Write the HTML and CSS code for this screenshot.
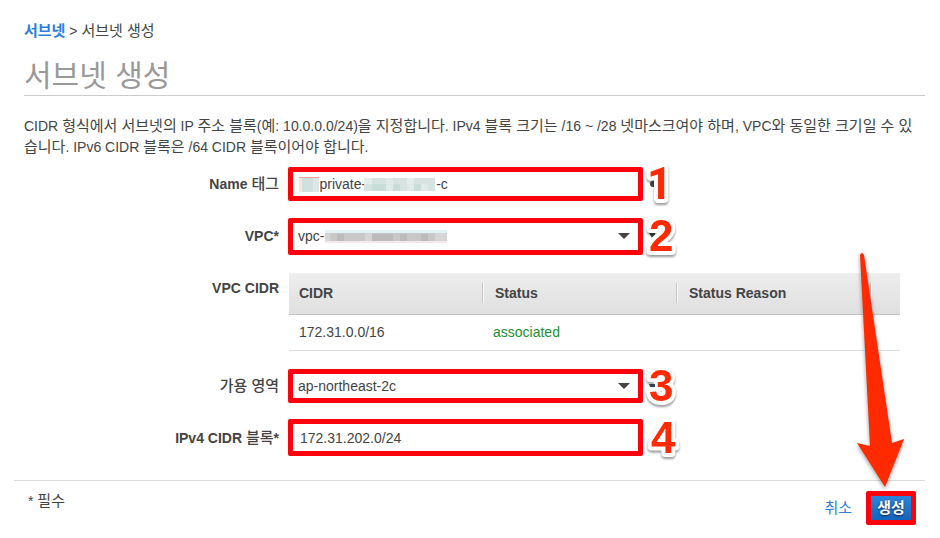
FILE: index.html
```html
<!DOCTYPE html>
<html lang="ko">
<head>
<meta charset="utf-8">
<title>서브넷 생성</title>
<link rel="stylesheet" href="styles.css">
</head>
<body>
<main class="page">
  <header class="head">
    <nav class="crumbs"><a class="ko strong" href="#">서브넷</a> &gt; <span class="ko">서브넷 생성</span></nav>
    <h1 class="title">서브넷 생성</h1>
    <p class="intro">CIDR <span class="ko">형식에서 서브넷의</span> IP <span class="ko">주소 블록</span>(<span class="ko">예</span>: 10.0.0.0/24)<span class="ko">을 지정합니다</span>. IPv4 <span class="ko">블록 크기는</span> /16 ~ /28 <span class="ko">넷마스크여야 하며</span>, VPC<span class="ko">와 동일한 크기일 수 있습니다</span>. IPv6 CIDR <span class="ko">블록은</span> /64 CIDR <span class="ko">블록이어야 합니다</span>.</p>
  </header>
  <form class="form">
    <div class="row">
      <label class="label" for="name">Name <span class="ko">태그</span></label>
      <div class="field">
        <input class="control short" id="name" type="text" value="     private-                  -c">
        <svg class="mask mask-prefix" width="20" height="15" aria-hidden="true" shape-rendering="crispEdges"><path fill="#cfe0df" d="M0 0h20v15H0z"/><path fill="#f3e6e4" d="M0 0h3v15H0z"/><path fill="#ff9a9a" d="M0 0h20v1H0z"/><path fill="#dbe8e7" d="M14 1h6v14h-6z"/></svg>
        <svg class="mask mask-middle" width="71" height="13" aria-hidden="true" shape-rendering="crispEdges"><path fill="#d6e3e1" d="M0 0h71v13H0z"/><path fill="#e6eeec" d="M0 0h8v6H0zM43 0h7v6h-7z"/><path fill="#c8dcd8" d="M8 6h14v7H8zM29 6h7v7h-7zM50 6h7v7h-7z"/><path fill="#dfe9e7" d="M22 0h7v13h-7zM43 6h7v7h-7zM57 6h7v7h-7z"/></svg>
        <svg class="mark" width="6" height="8" aria-hidden="true"><circle cx="4" cy="4" r="3" fill="#444"/></svg>
        <svg class="num num-one" width="40" height="44"><text x="4" y="37">1</text></svg>
      </div>
    </div>
    <div class="row">
      <label class="label" for="vpc">VPC*</label>
      <div class="field">
        <select class="control tall" id="vpc"><option>vpc-</option></select>
        <svg class="arrow" width="12" height="6" aria-hidden="true"><path fill="#444" d="M0 0h12L6 6z"/></svg>
        <svg class="mask mask-vpc" width="122" height="13" aria-hidden="true" shape-rendering="crispEdges"><path fill="#e2f3f5" d="M0 0h122v3H0z"/><path fill="#c9c8c9" d="M0 3h122v8H0z"/><path fill="#f6e8ea" d="M0 11h122v2H0z"/><path fill="#bcbabb" d="M12 4h7v7h-7zM47 4h21v7H47zM75 4h7v7h-7zM96 4h7v7h-7z"/><path fill="#d6d4d6" d="M0 3h5v8H0zM40 3h7v8h-7zM110 3h12v8h-12z"/></svg>
        <svg class="mark" width="6" height="6" aria-hidden="true"><path fill="#444" d="M0 0h6v2L3 5z"/></svg>
        <svg class="num" width="40" height="44"><text x="6" y="37">2</text></svg>
      </div>
    </div>
    <div class="row table-row">
      <div class="label">VPC CIDR</div>
      <table class="cidrs">
        <thead><tr><th class="c1"><span>CIDR</span></th><th class="c2"><span>Status</span></th><th class="c3"><span>Status Reason</span></th><th class="c4"></th></tr></thead>
        <tbody><tr><td>172.31.0.0/16</td><td class="ok">associated</td><td></td><td></td></tr></tbody>
      </table>
    </div>
    <div class="row">
      <label class="label" for="zone"><span class="ko">가용 영역</span></label>
      <div class="field">
        <select class="control short" id="zone"><option>ap-northeast-2c</option></select>
        <svg class="arrow" width="12" height="6" aria-hidden="true"><path fill="#444" d="M0 0h12L6 6z"/></svg>
        <svg class="num" width="40" height="44"><text x="6" y="37">3</text></svg>
        <svg class="mark" width="6" height="6" aria-hidden="true"><path fill="#345" d="M0 1h6v3H1z"/></svg>
      </div>
    </div>
    <div class="row">
      <label class="label" for="block">IPv4 CIDR <span class="ko">블록</span>*</label>
      <div class="field">
        <input class="control tall" id="block" type="text" value="172.31.202.0/24">
        <svg class="num" width="40" height="44"><text x="8" y="37">4</text></svg>
      </div>
    </div>
    <footer class="foot">
      <span>* <span class="ko">필수</span></span>
      <div class="actions">
        <a class="ko" href="#">취소</a>
        <button class="submit" type="submit">생성</button>
        <svg class="pointer" width="60" height="244" viewBox="0 0 60 244" aria-hidden="true"><path fill="#ff2a00" d="M6 4Q8 0 10 4L38 192L50 188L31 236L3 192L16 195z"/></svg>
      </div>
    </footer>
  </form>
</main>
</body>
</html>
```
FILE: styles.css
```css
* { box-sizing: border-box; }
body {
  margin: 0;
  background: #fff;
  color: #444;
  font: 14px/20px "Liberation Sans", "Noto Sans CJK KR", sans-serif;
}
a { color: #2e7de0; text-decoration: none; }
.ko { font-size: 15px; line-height: 1; }
.strong { font-weight: bold; }
.page { padding: 21px 15px 0 14px; }
.head { padding-left: 10px; }
.crumbs { height: 20px; }
.title {
  margin: 11px 0 20px;
  height: 44px;
  border-bottom: 1px solid #ccc;
  color: #999;
  font-size: 30px;
  line-height: 48px;
  font-weight: 400;
}
.intro { margin: 0; line-height: 21px; }
.row {
  display: flex;
  align-items: center;
  min-height: 52px;
}
.label {
  width: 265px;
  margin-right: 9px;
  text-align: right;
  font-weight: bold;
  flex: none;
}
.label .ko { font-weight: 500; }
.field { position: relative; display: flex; align-items: center; }
.control {
  width: 355px;
  border: 5px solid #ff000c;
  border-radius: 2px;
  padding: 0 7px;
  background: #fff;
  color: #444;
  font: inherit;
  outline: 0;
  appearance: none;
}
select.control { padding: 0 5px; }
.short { height: 34px; }
.tall { height: 37px; }
.arrow { position: absolute; left: 330px; }
.mask { position: absolute; }
.mask-prefix { left: 11px; }
.mask-middle { left: 76px; }
.mask-vpc { left: 37px; }
.mark { position: absolute; left: 361px; }
.num {
  position: absolute;
  left: 355px;
  overflow: visible;
  fill: #ff2a00;
  stroke: #fff;
  stroke-width: 8px;
  stroke-linejoin: round;
  paint-order: stroke;
  font: bold 44px/44px "Liberation Sans", sans-serif;
  filter: drop-shadow(0 2px 1px rgba(0, 0, 0, 0.4));
}
.num-one { font-family: Roboto, sans-serif; }
.table-row { align-items: flex-start; padding: 11px 25px 9px 0; }
.table-row .label { padding-top: 5px; }
.cidrs { flex: 1; table-layout: fixed; border-collapse: collapse; margin-left: 1px; }
.cidrs th {
  height: 41px;
  padding: 0;
  border-bottom: 1px solid #c4c4c4;
  background: linear-gradient(#eee, #dfdfdf);
  text-align: left;
}
.cidrs th span { display: block; padding-left: 10px; }
.cidrs th + th span { padding-left: 13px; }
.cidrs th + th::before {
  content: "";
  float: left;
  height: 20px;
  border-left: 1px solid #c6c6c6;
  border-right: 1px solid #f8f8f8;
}
.c1 { width: 193px; }
.c2, .c3 { width: 194px; }
.cidrs td { height: 36px; padding: 0 11px 0 10px; border-bottom: 1px solid #ddd; }
.cidrs td + td { padding-left: 11px; }
.cidrs .ok { color: #1a9035; }
.foot {
  display: flex;
  justify-content: space-between;
  margin-top: 16px;
  padding: 10px 9px 0 14px;
  border-top: 1px solid #ddd;
}
.actions { position: relative; display: flex; align-items: center; gap: 14px; }
.submit {
  width: 50px;
  height: 34px;
  padding: 0;
  border: 5px solid #ff000c;
  border-radius: 2px;
  background: linear-gradient(#2f84da, #1563bd);
  color: #fff;
  font: bold 15px/20px "Liberation Sans", "Noto Sans CJK KR", sans-serif;
  text-shadow: 0 1px 2px #124;
}
.pointer {
  position: absolute;
  right: 2px;
  bottom: 30px;
  overflow: visible;
  filter: drop-shadow(0 2px 2px rgba(0, 0, 0, 0.4));
}
```
